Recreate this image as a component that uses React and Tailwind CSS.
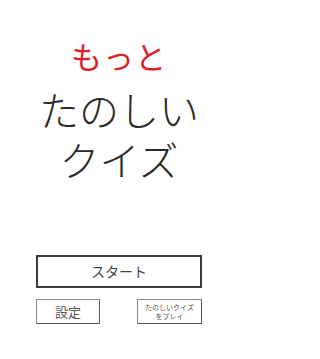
export default function App() {
  return (
    <div
      className="w-[238px] h-[359px] bg-white flex flex-col items-center"
      style={{ fontFamily: '"Noto Sans CJK JP", "Noto Sans", sans-serif' }}
    >
      <div className="pt-[40px] flex flex-col items-center">
        <p className="text-[31px] leading-[31px] text-[#d8232a] tracking-[1px]">もっと</p>
        <p className="mt-[13px] text-[40px] leading-[50px] text-[#2a2a2a] font-light">たのしい</p>
        <p className="text-[40px] leading-[50px] text-[#2a2a2a] font-light">クイズ</p>
      </div>

      <button className="mt-[71px] w-[166px] h-[33px] border-2 border-[#3a3a3a] bg-white text-[14px] text-[#444] flex items-center justify-center">
        スタート
      </button>

      <div className="mt-[11px] w-[166px] flex justify-between">
        <button className="w-[64px] h-[25px] border border-[#8a8a8a] border-r-[#555] border-b-[#555] bg-white text-[13px] text-[#555] flex items-center justify-center">
          設定
        </button>
        <button className="w-[65px] h-[25px] border border-[#8a8a8a] border-r-[#555] border-b-[#555] bg-white text-[7px] leading-[9px] text-[#555] flex flex-col items-center justify-center">
          <span>たのしいクイズ</span>
          <span>をプレイ</span>
        </button>
      </div>
    </div>
  );
}
